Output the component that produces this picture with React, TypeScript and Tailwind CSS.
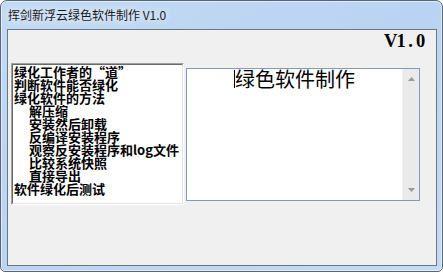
import React from 'react';

const items: { text: string; sub?: boolean }[] = [
  { text: '绿化工作者的“道”' },
  { text: '判断软件能否绿化' },
  { text: '绿化软件的方法' },
  { text: '解压缩', sub: true },
  { text: '安装然后卸载', sub: true },
  { text: '反编译安装程序', sub: true },
  { text: '观察反安装程序和log文件', sub: true },
  { text: '比较系统快照', sub: true },
  { text: '直接导出', sub: true },
  { text: '软件绿化后测试' },
];

export default function App() {
  return (
    <div className="w-[443px] h-[273px] bg-white font-['Noto_Sans_CJK_SC',sans-serif]">
      <div className="h-[272px] rounded-t-[7px] rounded-b-[5px] border border-[#56667a] bg-gradient-to-br from-[#c2d9f3] via-[#b9d4f2] to-[#c4dbf4] shadow-[inset_0_0_0_1px_rgba(255,255,255,0.55)] flex flex-col">
        {/* title bar */}
        <div className="h-[28px] pl-[7px] flex items-center">
          <span className="text-[12px] leading-[12px] text-[#1a1a1a] [text-shadow:0_0_6px_#eaf3fc,0_0_10px_#eaf3fc]">
            挥剑新浮云绿色软件制作 V1.0
          </span>
        </div>

        {/* client area */}
        <div className="ml-[6px] mr-[5px] mb-[5px] flex-1 border border-[#6b7684] bg-[#f0f0f0] flex flex-col">
          <div className="h-[33px] pr-[10px] flex justify-end">
            <span className="mt-[2px] flex font-['Liberation_Serif',serif] font-bold text-[18.5px] leading-[18px] text-black">
              <span className="w-[12px] text-center">V</span>
              <span className="w-[10px] text-center">1</span>
              <span className="w-[9px] text-center">.</span>
              <span className="w-[11px] text-center">0</span>
            </span>
          </div>

          <div className="flex items-start pl-[3px] gap-[2px]">
            {/* list box */}
            <div className="w-[173px] h-[142px] border border-t-[#a0a0a0] border-l-[#a0a0a0] border-r-white border-b-white">
              <div className="h-full border border-t-[#696969] border-l-[#696969] border-r-[#e3e3e3] border-b-[#e3e3e3] bg-white pl-[1px]">
                {items.map((it) => (
                  <div
                    key={it.text}
                    className={`text-[13px] leading-[13px] font-bold text-black whitespace-nowrap ${it.sub ? 'pl-[15px]' : ''}`}
                  >
                    {it.text}
                  </div>
                ))}
              </div>
            </div>

            {/* text area */}
            <div className="mt-[5px] w-[234px] h-[133px] border border-[#7f9db9] bg-white flex">
              <div className="flex-1 flex justify-center">
                <div className="flex items-start text-[20px] leading-[20px] text-black">
                  <span className="inline-block w-px h-[18px] mt-[1px] bg-black" />
                  <span>绿色软件制作</span>
                </div>
              </div>
              <div className="w-[17px] bg-[#eaeaea] border-l border-[#f4f4f4] flex flex-col items-center justify-between py-[8px]">
                <svg width="7" height="4" viewBox="0 0 7 4">
                  <path d="M0 4 L3.5 0 L7 4 Z" fill="#9a9a9a" />
                </svg>
                <svg width="7" height="4" viewBox="0 0 7 4">
                  <path d="M0 0 L7 0 L3.5 4 Z" fill="#9a9a9a" />
                </svg>
              </div>
            </div>
          </div>
        </div>
      </div>
    </div>
  );
}
